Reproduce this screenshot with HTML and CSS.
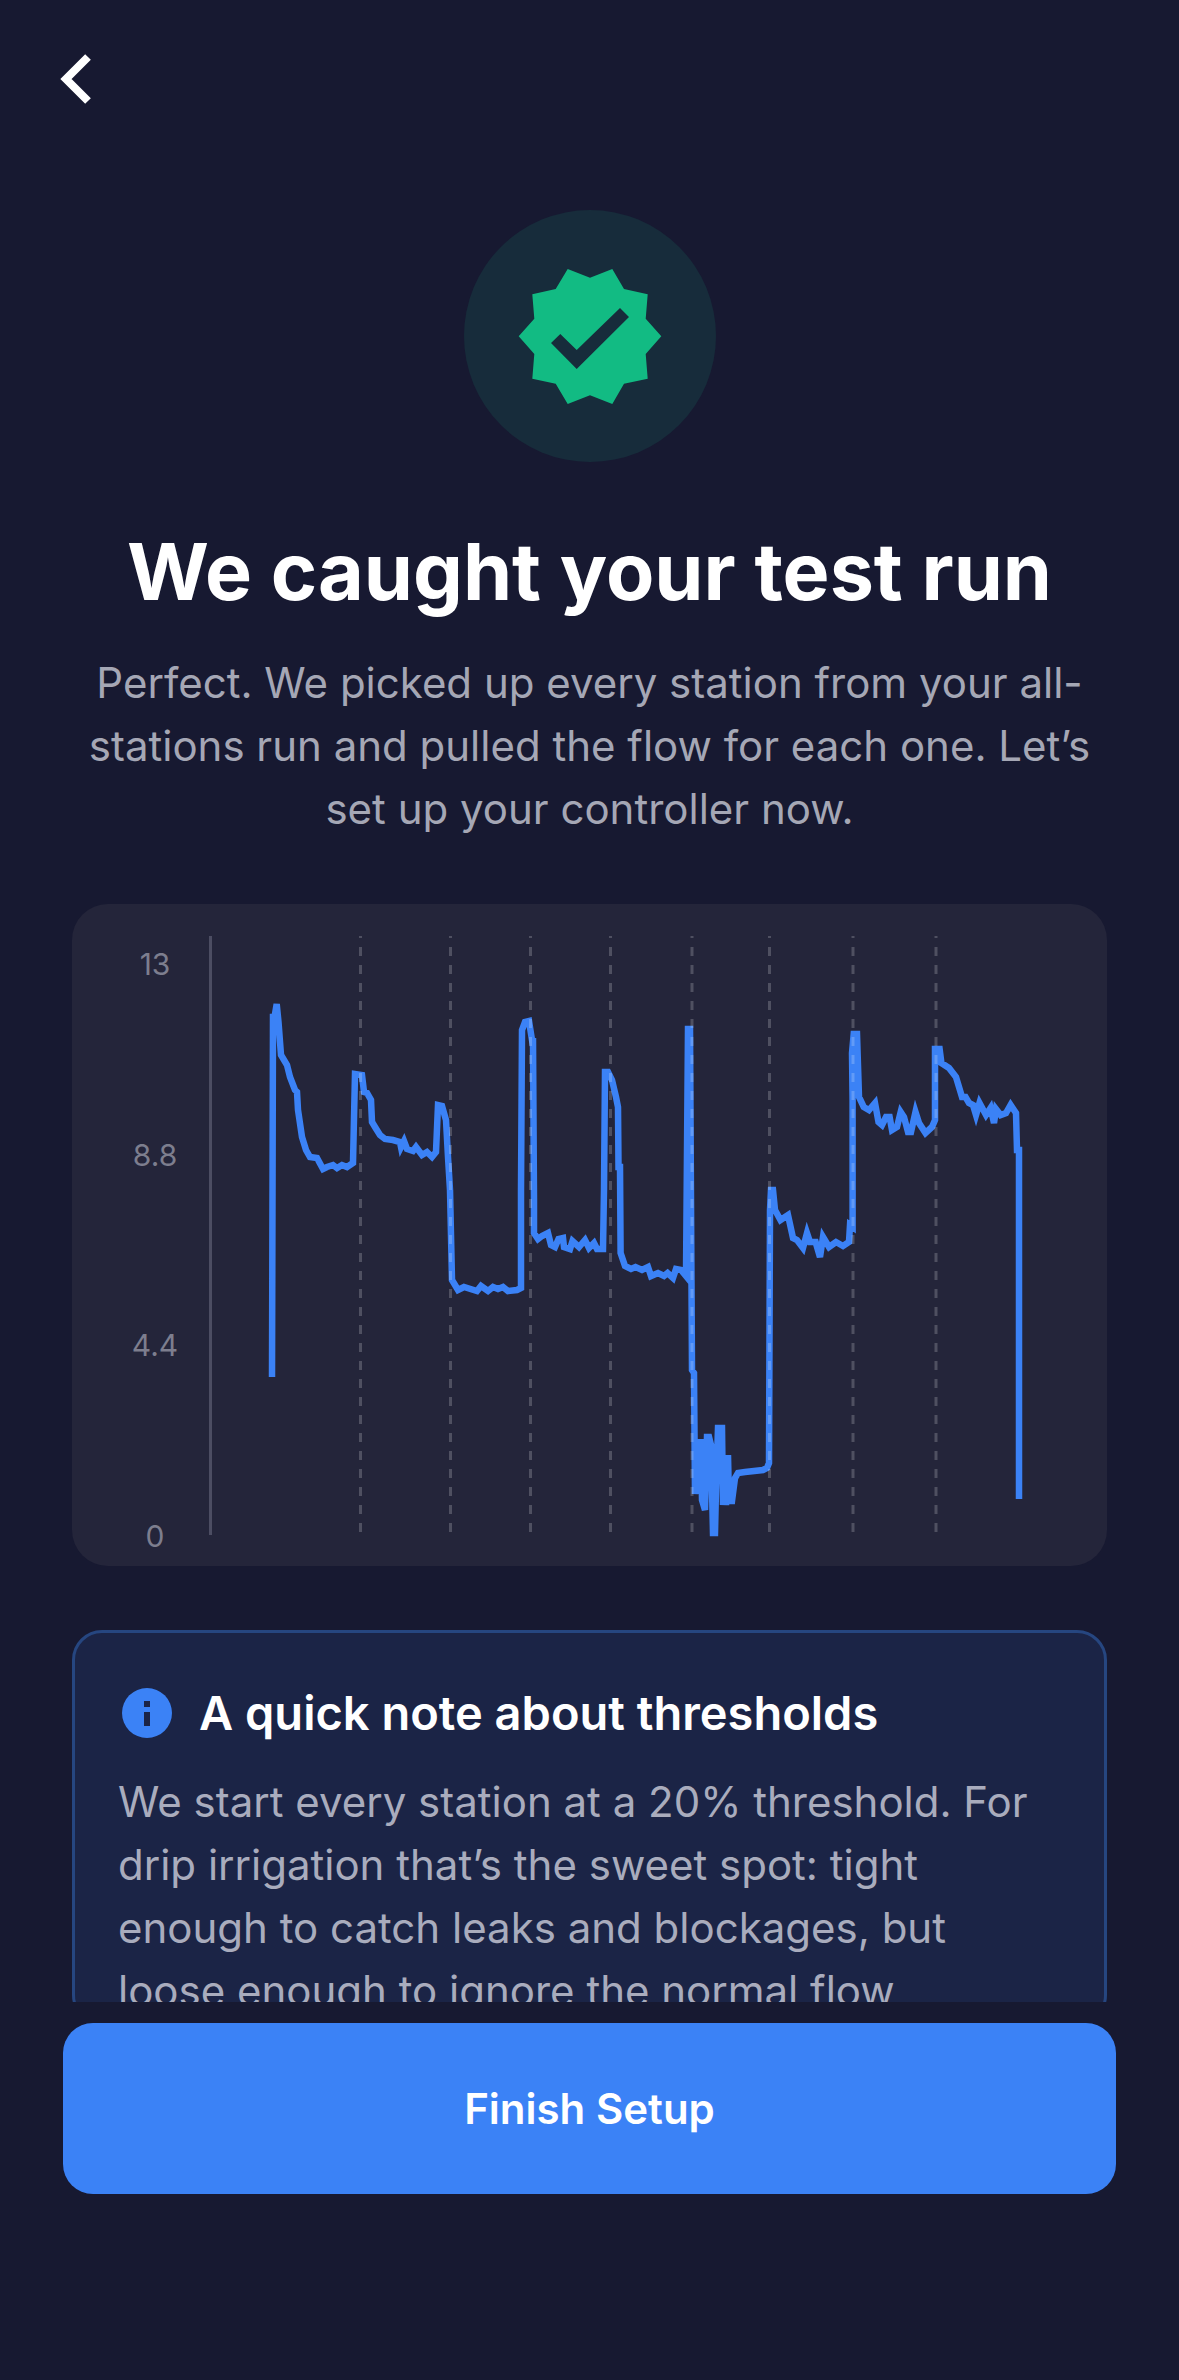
FILE: index.html
```html
<!DOCTYPE html>
<html lang="en">
<head>
<meta charset="utf-8">
<title>We caught your test run</title>
<link rel="stylesheet" href="styles.css">
</head>
<body>
<div class="app">
  <main class="scroll">
    <button class="back" aria-label="Back">
      <svg width="34" height="52" viewBox="0 0 34 52"><path class="back-path" d="M29 4 L7 26 L29 48"/></svg>
    </button>
    <div class="badge">
      <svg width="252" height="252" viewBox="464 210 252 252"><path class="badge-star" fill-rule="evenodd" d="M567.7 269 L590 277.7 L612.3 269 L624 289 L647.7 294.3 L645.7 318.7 L661.3 336.3 L645.7 354 L647.7 378.7 L624 383.7 L612.3 404 L590 395.3 L567.7 404 L555.7 383.7 L532.3 378.7 L534.3 354 L518.7 336.3 L534.3 318.7 L532.3 294.3 L555.7 289 Z M551 343 L560.3 334 L576.7 350 L620 308 L629 317 L576.7 369 Z"/></svg>
    </div>
    <h1 class="title">We caught your test run</h1>
    <p class="lead">Perfect. We picked up every station from your all-stations run and pulled the flow for each one. Let’s set up your controller now.</p>
    <section class="chart-card">
      <div class="y-labels"><span>13</span><span>8.8</span><span>4.4</span><span>0</span></div>
      <svg class="plot" width="840" height="610" viewBox="200 930 840 610">
        <line class="axis" x1="210.5" y1="936" x2="210.5" y2="1535"/>
        <path class="flow" d="M272 1377 L273 1017 L274.5 1017 L276.7 1004 L278.5 1022 L281 1055 L287 1065 L290 1077 L295 1090 L297 1092 L298 1110 L302 1137 L306 1150 L310 1157 L317 1158 L323 1169 L327 1167 L333 1165 L337 1168 L342 1165 L347 1167 L353 1163 L355 1074 L362 1075 L364 1092 L367 1093 L371 1100 L372 1122 L375 1127 L380 1135 L385 1139 L393 1140 L400 1142 L401 1147 L404 1141 L407 1149 L413 1151 L416 1147 L422 1155 L427 1152 L432 1157 L436 1152 L438 1105 L442 1106 L446 1120 L448 1157 L450 1190 L452 1280 L458 1290 L464 1287 L477 1291 L481 1286 L488 1291 L493 1287 L498 1289 L503 1287 L508 1291 L517 1290 L521 1288 L521 1190 L522 1030 L525 1022 L529 1021 L532 1040 L533 1038 L534 1200 L534 1233 L538 1239 L542 1236 L548 1233 L551 1245 L555 1247 L558.5 1239 L563 1238 L564 1247 L570 1249 L572.5 1241 L579 1247 L585 1240 L589 1248 L594 1243 L597 1249 L603 1249 L604 1190 L605 1072 L608 1072 L612 1080 L616 1097 L618 1107 L618.5 1167 L620 1167 L620.6 1253 L625 1266 L631 1269 L635.5 1267 L642 1270 L648 1267 L651 1276 L658 1273 L664 1276 L667.6 1273 L673 1278 L676 1269 L681 1270 L686 1276 L688 1029 L690 1029 L692 1370 L694 1373 L695 1494 L698 1439 L699 1494 L701 1439 L702 1500 L705 1510 L707 1437 L709 1437 L711 1445 L713 1533 L715 1533 L716 1490 L718 1428 L722 1428 L723 1505 L725 1455 L726 1505 L728 1455 L729 1501 L732 1501 L735 1478 L738 1473 L745 1472 L763 1470 L767 1468 L769 1463 L770 1210 L771 1190 L773 1190 L775 1210 L780.5 1220 L788 1215 L793 1238 L797 1240 L803 1248 L807 1233 L810 1242 L815.6 1242 L820 1257 L823 1237 L829 1247 L836 1242 L843 1246 L849 1242 L850 1225 L852.6 1227 L852.6 1100 L852 1053 L853.7 1034 L857 1034 L859 1097 L863.7 1107 L869 1110 L875 1103 L878.5 1122 L882 1125 L886 1117 L889.6 1117 L892 1130 L897 1127 L900.7 1112 L904 1117 L908 1132 L911 1132 L915.5 1112 L919 1123 L925.5 1133 L932 1127 L935 1120 L935 1049 L939.6 1049 L941.4 1063 L949 1068 L956 1077 L962 1097 L965.5 1097 L969 1103 L973 1105 L976 1115 L979.5 1103 L986 1115 L990.6 1108 L994 1123 L996 1109 L1000.6 1115 L1006 1113 L1010.6 1105 L1016 1113 L1017 1150 L1019 1150 L1019 1499"/>
        <line class="split" x1="360.5" y1="936" x2="360.5" y2="1532"/>
        <line class="split" x1="450.5" y1="936" x2="450.5" y2="1532"/>
        <line class="split" x1="530.5" y1="936" x2="530.5" y2="1532"/>
        <line class="split" x1="610.5" y1="936" x2="610.5" y2="1532"/>
        <line class="split" x1="692" y1="936" x2="692" y2="1532"/>
        <line class="split" x1="769.5" y1="936" x2="769.5" y2="1532"/>
        <line class="split" x1="853" y1="936" x2="853" y2="1532"/>
        <line class="split" x1="936" y1="936" x2="936" y2="1532"/>
      </svg>
    </section>
    <section class="note">
      <div class="note-head">
        <svg class="note-icon" width="50" height="50" viewBox="0 0 50 50"><circle class="info-disc" cx="25" cy="25" r="25"/><rect class="info-mark" x="22" y="13" width="6" height="6"/><rect class="info-mark" x="22" y="24" width="6" height="14"/></svg>
        <h2 class="note-title">A quick note about thresholds</h2>
      </div>
      <p class="note-body">We start every station at a 20% threshold. For drip irrigation that’s the sweet spot: tight enough to catch leaks and blockages, but loose enough to ignore the normal flow</p>
    </section>
  </main>
  <footer class="footer">
    <button class="cta">Finish Setup</button>
  </footer>
</div>
</body>
</html>
```

FILE: styles.css
```css
* { box-sizing: border-box; }
html, body { margin: 0; padding: 0; background: #171931; }
body { font-family: "Inter", "Liberation Sans", sans-serif; }
.app { width: 1179px; height: 2380px; display: flex; flex-direction: column; background: #171931; }
.scroll { height: 2002px; overflow: hidden; padding: 0 72px; display: flex; flex-direction: column; flex: none; }
.back { align-self: flex-start; background: none; border: 0; padding: 0; margin: 53px 0 0 -13px; width: 34px; height: 52px; display: block; flex: none; }
.back svg { display: block; }
.back-path { fill: none; stroke: #fff; stroke-width: 8; }
.badge { width: 252px; height: 252px; border-radius: 50%; background: #172c3b; align-self: center; margin-top: 105px; flex: none; }
.badge svg { display: block; }
.badge-star { fill: #12bb83; }
.title { margin: 62px 0 0; font-size: 79px; line-height: 94px; font-weight: 700; color: #fff; text-align: center; flex: none; }
.lead { margin: 33px 0 0; font-size: 42px; line-height: 63px; color: #a5a7b5; text-align: center; flex: none; }
.chart-card { height: 662px; margin-top: 64px; background: #24253a; border-radius: 36px; padding: 26px 67px 13px 38px; display: flex; flex: none; }
.y-labels { width: 90px; padding-top: 17px; display: flex; flex-direction: column; justify-content: space-between; align-items: center; font-size: 30px; line-height: 34px; color: #7d7e8e; }
.plot { display: block; flex: none; }
.axis { stroke: #4c4d62; stroke-width: 3; }
.split { stroke: rgba(255,255,255,.2); stroke-width: 3; stroke-dasharray: 9 9; stroke-dashoffset: 7; }
.flow { fill: none; stroke: #3b82f6; stroke-width: 6.5; }
.note { margin-top: 63.5px; background: #1b2446; border: 3px solid #264680; border-radius: 30px; padding: 52px 71px 0 43px; flex: none; }
.note-head { display: flex; align-items: center; gap: 27px; padding-left: 4px; white-space: nowrap; }
.note-icon { display: block; flex: none; }
.info-disc { fill: #3b82f6; }
.info-mark { fill: #1b2446; }
.note-title { margin: 0; font-size: 47px; line-height: 56px; font-weight: 600; color: #fff; }
.note-body { margin: 29px 0 0; font-size: 42px; line-height: 63px; color: #a9acbd; }
.footer { padding: 21px 63px 0; flex: none; }
.cta { display: block; width: 100%; height: 171px; border: 0; border-radius: 30px; background: #3b82f6; color: #fff; font-family: inherit; font-size: 42px; font-weight: 600; }
```
